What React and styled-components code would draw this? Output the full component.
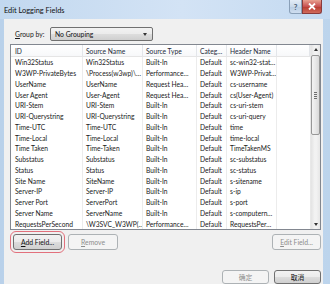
import styled, { createGlobalStyle } from "styled-components";

const GlobalStyle = createGlobalStyle`
  body {
    margin: 0;
    overflow: hidden;
    font-family: Lato, "Noto Sans", "Noto Sans CJK SC", sans-serif;
  }
`;

const Window = styled.div`
  width: 330px;
  height: 284px;
  display: flex;
  flex-direction: column;
  background: linear-gradient(90deg, #b9d1ea 0%, #c9dcf1 60%, #bcd4ec 100%);
  overflow: hidden;
`;

const TitleBar = styled.div`
  height: 19px;
  flex: none;
  display: flex;
  align-items: flex-start;
  background: linear-gradient(90deg, #c2d8ef 0%, #d3e3f5 55%, #c4daf1 100%);
`;

const Title = styled.div`
  font-size: 7.4px;
  color: #111;
  margin: 6px 0 0 4px;
`;

const CaptionButtons = styled.div`
  margin-left: auto;
  margin-right: 8px;
  display: flex;
`;

const CaptionButton = styled.div`
  width: ${(p) => (p.close ? "20px" : "13px")};
  height: 14px;
  display: flex;
  align-items: center;
  justify-content: center;
  border: 1px solid ${(p) => (p.close ? "#8a3b3b" : "#8aa0b8")};
  border-top: none;
  border-radius: 0 0 ${(p) => (p.close ? "3px" : "0")} ${(p) => (p.close ? "0" : "3px")};
  background: ${(p) =>
    p.close
      ? "linear-gradient(#e8a190, #c75050 50%, #b83a2e 51%, #d06b5c)"
      : "linear-gradient(#e3ecf6, #c9d9ea 50%, #b8cce2 51%, #cfdef0)"};
  color: ${(p) => (p.close ? "#fff" : "#4b5f75")};
  font-size: 8px;
  font-weight: bold;
  box-sizing: border-box;
`;

const Client = styled.div`
  flex: 1;
  margin: 0 7px 0 4px;
  background: #f0f0f0;
  padding: 8px 2px 0 6px;
  display: flex;
  flex-direction: column;
`;

const GroupRow = styled.div`
  height: 14px;
  display: flex;
  align-items: center;
  padding-left: 5px;
`;

const Label = styled.span`
  font-size: 6.8px;
  color: #1a1a1a;
  width: 35px;
  u {
    text-decoration: underline;
  }
`;

const Select = styled.div`
  width: 103px;
  height: 14px;
  box-sizing: border-box;
  border: 1px solid #707070;
  border-radius: 2px;
  background: linear-gradient(#f2f2f2 0%, #ebebeb 50%, #dddddd 51%, #cfcfcf 100%);
  display: flex;
  align-items: center;
  padding: 0 5px 0 4px;
  font-size: 6.8px;
  color: #111;
  span {
    flex: 1;
  }
`;

const Arrow = styled.div`
  width: 0;
  height: 0;
  border-left: 2.5px solid transparent;
  border-right: 2.5px solid transparent;
  border-top: ${(p) => (p.up ? "none" : "3px solid #333")};
  border-bottom: ${(p) => (p.up ? "3px solid #333" : "none")};
`;

const List = styled.div`
  margin-top: 3px;
  width: 311px;
  height: 186px;
  box-sizing: border-box;
  border: 1px solid #828790;
  background: #fff;
  display: flex;
`;

const Table = styled.div`
  flex: 1;
  display: grid;
  grid-template-columns: 72px 60px 54px 30px 50px 1fr;
  grid-template-rows: 12px repeat(16, 10.75px);
  align-content: start;
`;

const HeaderCell = styled.div`
  font-size: 6.7px;
  color: #1e2a3a;
  padding-left: ${(p) => (p.first ? "4px" : "3px")};
  display: flex;
  align-items: center;
  border-right: 1px solid #e3e6ea;
  border-bottom: 1px solid #e5e5e5;
  background: linear-gradient(#ffffff, #f7f8fa);
  white-space: nowrap;
  overflow: hidden;
`;

const Cell = styled.div`
  font-size: 6.7px;
  color: #1a1a1a;
  padding-left: ${(p) => (p.first ? "4px" : "3px")};
  display: flex;
  align-items: center;
  border-right: ${(p) => (p.last ? "none" : "1px solid #ececec")};
  white-space: nowrap;
  overflow: hidden;
`;

const Scrollbar = styled.div`
  width: 9px;
  flex: none;
  background: linear-gradient(90deg, #e3e3e3, #f2f2f2 40%, #f2f2f2 60%, #e6e6e6);
  border-left: 1px solid #e8e8e8;
  display: flex;
  flex-direction: column;
`;

const ScrollArrow = styled.div`
  height: 9px;
  display: flex;
  align-items: center;
  justify-content: center;
`;

const Thumb = styled.div`
  margin: 1px 0 0 0;
  height: 80px;
  box-sizing: border-box;
  border: 1px solid #979797;
  border-radius: 2px;
  background: linear-gradient(90deg, #f3f3f3, #e8e8e8 50%, #d9d9d9);
  display: flex;
  flex-direction: column;
  align-items: center;
  justify-content: center;
  gap: 1px;
  i {
    display: block;
    width: 3px;
    height: 1px;
    background: #6d6d6d;
  }
`;

const Track = styled.div`
  flex: 1;
`;

const ButtonRow = styled.div`
  margin-top: 4px;
  display: flex;
  align-items: center;
  gap: 6px;
  padding-left: 3px;
`;

const Button = styled.div`
  width: ${(p) => p.w || "49px"};
  height: 16px;
  box-sizing: border-box;
  border: 1px solid ${(p) => (p.disabled ? "#adb2b5" : "#707070")};
  border-radius: 3px;
  background: ${(p) =>
    p.disabled
      ? "#f4f4f4"
      : "linear-gradient(#f2f2f2 0%, #ebebeb 50%, #dddddd 51%, #cfcfcf 100%)"};
  color: ${(p) => (p.disabled ? "#8d8d8d" : "#111")};
  font-size: 6.8px;
  display: flex;
  align-items: center;
  justify-content: center;
  outline: ${(p) => (p.marked ? "1.5px solid #e2707c" : "none")};
  outline-offset: 2px;
  margin-left: ${(p) => (p.right ? "auto" : "0")};
  u {
    text-decoration: underline;
  }
`;

const DialogButtons = styled.div`
  margin-top: 20px;
  display: flex;
  justify-content: flex-end;
  gap: 5px;
  ${Button} {
    height: 14px;
  }
`;

const columns = ["ID", "Source Name", "Source Type", "Categ…", "Header Name", ""];

const rows = [
  ["Win32Status", "Win32Status", "Built-In", "Default", "sc-win32-stat…"],
  ["W3WP-PrivateBytes", "\\Process(w3wp)\\…", "Performance…", "Default", "W3WP-Privat…"],
  ["UserName", "UserName", "Request Hea…", "Default", "cs-username"],
  ["User Agent", "User-Agent", "Request Hea…", "Default", "cs(User-Agent)"],
  ["URI-Stem", "URI-Stem", "Built-In", "Default", "cs-uri-stem"],
  ["URI-Querystring", "URI-Querystring", "Built-In", "Default", "cs-uri-query"],
  ["Time-UTC", "Time-UTC", "Built-In", "Default", "time"],
  ["Time-Local", "Time-Local", "Built-In", "Default", "time-local"],
  ["Time Taken", "Time-Taken", "Built-In", "Default", "TimeTakenMS"],
  ["Substatus", "Substatus", "Built-In", "Default", "sc-substatus"],
  ["Status", "Status", "Built-In", "Default", "sc-status"],
  ["Site Name", "SiteName", "Built-In", "Default", "s-sitename"],
  ["Server-IP", "Server-IP", "Built-In", "Default", "s-ip"],
  ["Server Port", "ServerPort", "Built-In", "Default", "s-port"],
  ["Server Name", "ServerName", "Built-In", "Default", "s-computern…"],
  ["RequestsPerSecond", "\\W3SVC_W3WP(…", "Performance…", "Default", "RequestsPer…"],
];

const App = () => {
  return (
    <>
      <GlobalStyle />
      <Window>
        <TitleBar>
          <Title>Edit Logging Fields</Title>
          <CaptionButtons>
            <CaptionButton>?</CaptionButton>
            <CaptionButton close>
              <svg width="8" height="7" viewBox="0 0 8 7">
                <path d="M1 0.5 L7 6.5 M7 0.5 L1 6.5" stroke="#fff" strokeWidth="1.8" />
              </svg>
            </CaptionButton>
          </CaptionButtons>
        </TitleBar>
        <Client>
          <GroupRow>
            <Label>
              <u>G</u>roup by:
            </Label>
            <Select>
              <span>No Grouping</span>
              <Arrow />
            </Select>
          </GroupRow>
          <List>
            <Table>
              {columns.map((c, i) => (
                <HeaderCell key={"h" + i} first={i === 0}>
                  {c}
                </HeaderCell>
              ))}
              {rows.map((r, ri) =>
                [...r, ""].map((v, ci) => (
                  <Cell key={ri + "-" + ci} first={ci === 0} last={ci === 5}>
                    {v}
                  </Cell>
                ))
              )}
            </Table>
            <Scrollbar>
              <ScrollArrow>
                <Arrow up />
              </ScrollArrow>
              <Thumb>
                <i />
                <i />
                <i />
                <i />
              </Thumb>
              <Track />
              <ScrollArrow>
                <Arrow />
              </ScrollArrow>
            </Scrollbar>
          </List>
          <ButtonRow>
            <Button marked>
              <span>
                <u>A</u>dd Field...
              </span>
            </Button>
            <Button disabled w="50px">
              <span>
                <u>R</u>emove
              </span>
            </Button>
            <Button disabled right>
              <span>
                <u>E</u>dit Field...
              </span>
            </Button>
          </ButtonRow>
          <DialogButtons>
            <Button disabled w="47px">确定</Button>
            <Button w="47px">取消</Button>
          </DialogButtons>
        </Client>
      </Window>
    </>
  );
};

export default App;
